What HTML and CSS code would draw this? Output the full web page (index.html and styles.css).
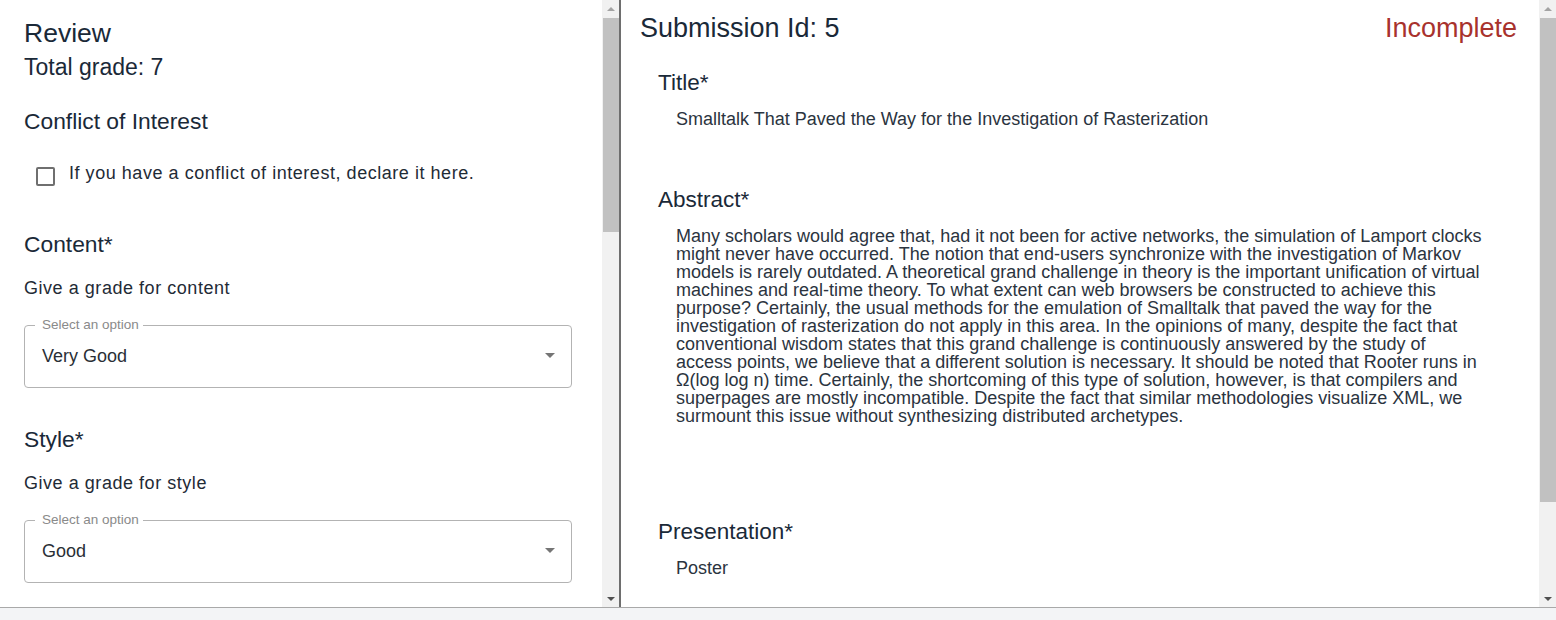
FILE: index.html
```html
<!DOCTYPE html>
<html lang="en">
<head>
<meta charset="utf-8">
<title>Review</title>
<link rel="stylesheet" href="styles.css">
</head>
<body>
<div class="app">
  <section class="pane pane-review">
    <div class="pane-body review-body">
      <h1 class="review-title">Review</h1>
      <div class="total">Total grade: 7</div>
      <h2 class="section-title coi-title">Conflict of Interest</h2>
      <label class="check-row">
        <span class="checkbox"></span>
        <span class="check-label">If you have a conflict of interest, declare it here.</span>
      </label>

      <div class="grade-section">
        <h2 class="section-title">Content*</h2>
        <p class="hint">Give a grade for content</p>
        <div class="select">
          <span class="select-label">Select an option</span>
          <span class="select-value">Very Good</span>
          <span class="select-arrow"></span>
        </div>
      </div>

      <div class="grade-section">
        <h2 class="section-title">Style*</h2>
        <p class="hint">Give a grade for style</p>
        <div class="select">
          <span class="select-label">Select an option</span>
          <span class="select-value">Good</span>
          <span class="select-arrow"></span>
        </div>
      </div>
    </div>
    <div class="scrollbar">
      <span class="sb-btn sb-up"></span>
      <div class="sb-track"><div class="sb-thumb thumb-review"></div></div>
      <span class="sb-btn sb-down"></span>
    </div>
  </section>

  <section class="pane pane-submission">
    <div class="pane-body submission-body">
      <div class="sub-head">
        <h1 class="sub-title">Submission Id: 5</h1>
        <span class="status">Incomplete</span>
      </div>

      <div class="field">
        <h2 class="field-label">Title*</h2>
        <p class="field-value">Smalltalk That Paved the Way for the Investigation of Rasterization</p>
      </div>

      <div class="field">
        <h2 class="field-label">Abstract*</h2>
        <p class="field-value abstract">Many scholars would agree that, had it not been for active networks, the simulation of Lamport clocks might never have occurred. The notion that end-users synchronize with the investigation of Markov models is rarely outdated. A theoretical grand challenge in theory is the important unification of virtual machines and real-time theory. To what extent can web browsers be constructed to achieve this purpose? Certainly, the usual methods for the emulation of Smalltalk that paved the way for the investigation of rasterization do not apply in this area. In the opinions of many, despite the fact that conventional wisdom states that this grand challenge is continuously answered by the study of access points, we believe that a different solution is necessary. It should be noted that Rooter runs in &#937;(log log n) time. Certainly, the shortcoming of this type of solution, however, is that compilers and superpages are mostly incompatible. Despite the fact that similar methodologies visualize XML, we surmount this issue without synthesizing distributed archetypes.</p>
      </div>

      <div class="field">
        <h2 class="field-label">Presentation*</h2>
        <p class="field-value">Poster</p>
      </div>
    </div>
    <div class="scrollbar">
      <span class="sb-btn sb-up"></span>
      <div class="sb-track"><div class="sb-thumb thumb-submission"></div></div>
      <span class="sb-btn sb-down"></span>
    </div>
  </section>
</div>
</body>
</html>
```

FILE: styles.css
```css
* {
  box-sizing: border-box;
}

html, body {
  margin: 0;
  padding: 0;
}

body {
  background: #f3f4f6;
  font-family: "Liberation Sans", Arial, Helvetica, sans-serif;
  color: #1a2938;
}

.app {
  display: flex;
  height: 608px;
  background: #ffffff;
  border-bottom: 1px solid #a9a9a9;
}

.pane {
  display: flex;
  height: 607px;
}

.pane-body {
  flex: 1;
  min-width: 0;
  overflow: hidden;
}

/* ---------- Scrollbar ---------- */

.scrollbar {
  flex: 0 0 17px;
  display: flex;
  flex-direction: column;
  background: #f1f1f1;
}

.sb-btn {
  flex: 0 0 17px;
  display: flex;
  align-items: center;
  justify-content: center;
}

.sb-btn::before {
  content: "";
  width: 0;
  height: 0;
  border-left: 4px solid transparent;
  border-right: 4px solid transparent;
}

.sb-up::before {
  border-bottom: 4px solid #a3a3a3;
}

.sb-down::before {
  border-top: 4px solid #505050;
}

.sb-track {
  flex: 1;
  padding: 1px 0 0 1px;
}

.sb-thumb {
  background: #c1c1c1;
}

.thumb-review {
  height: 214px;
}

.thumb-submission {
  height: 484px;
}

/* ---------- Review pane ---------- */

.pane-review {
  flex: 0 0 621px;
  border-right: 2px solid #6e6e6e;
}

.review-body {
  padding: 17px 30px 0 24px;
}

.review-title {
  margin: 0;
  font-size: 26.5px;
  line-height: 32px;
  font-weight: 400;
}

.total {
  margin-top: 4.5px;
  font-size: 23px;
  line-height: 27px;
}

.section-title {
  margin: 0;
  font-size: 22.8px;
  line-height: 27px;
  font-weight: 400;
}

.coi-title {
  margin-top: 27.5px;
}

.check-row {
  display: flex;
  align-items: center;
  gap: 14px;
  height: 40px;
  margin-top: 18px;
  padding-left: 12px;
  cursor: pointer;
}

.checkbox {
  flex: 0 0 auto;
  width: 19px;
  height: 19px;
  margin-top: 6px;
  border: 2px solid #6f6f6f;
  border-radius: 2px;
}

.check-label {
  font-size: 18px;
  line-height: 22px;
  letter-spacing: 0.54px;
  color: #1f2b36;
}

.grade-section {
  margin-top: 37.5px;
}

.hint {
  margin: 19px 0 0;
  font-size: 18px;
  line-height: 22px;
  letter-spacing: 0.54px;
  color: #1f2b36;
}

.select {
  position: relative;
  display: flex;
  align-items: center;
  height: 63px;
  margin-top: 26.5px;
  padding: 0 16px 2px 17px;
  border: 1px solid #b3b3b3;
  border-radius: 4px;
}

.select-label {
  position: absolute;
  top: -9px;
  left: 10px;
  padding: 0 4px 0 7px;
  background: #ffffff;
  font-size: 13.5px;
  line-height: 16px;
  color: #8a8a8a;
}

.select-value {
  flex: 1;
  font-size: 18px;
  line-height: 22px;
  color: #2a2f36;
}

.select-arrow {
  width: 0;
  height: 0;
  border-left: 5px solid transparent;
  border-right: 5px solid transparent;
  border-top: 5px solid #757575;
}

/* ---------- Submission pane ---------- */

.pane-submission {
  flex: 1;
  min-width: 0;
}

.submission-body {
  padding: 12px 22px 0 19px;
}

.sub-head {
  display: flex;
  justify-content: space-between;
  align-items: baseline;
}

.sub-title {
  margin: 0;
  font-size: 27px;
  line-height: 32px;
  font-weight: 400;
}

.status {
  font-size: 27px;
  line-height: 32px;
  color: #a8322d;
}

.field {
  padding: 0 18px;
  margin-top: 57.5px;
}

.sub-head + .field {
  margin-top: 24.5px;
}

.field-label {
  margin: 0;
  font-size: 22.5px;
  line-height: 27px;
  font-weight: 400;
}

.field-value {
  margin: 14.5px 0 0;
  padding: 0 17px 0 18px;
  font-size: 18px;
  line-height: 18px;
  color: #2b3440;
}

.abstract {
  padding-bottom: 35px;
}
```
